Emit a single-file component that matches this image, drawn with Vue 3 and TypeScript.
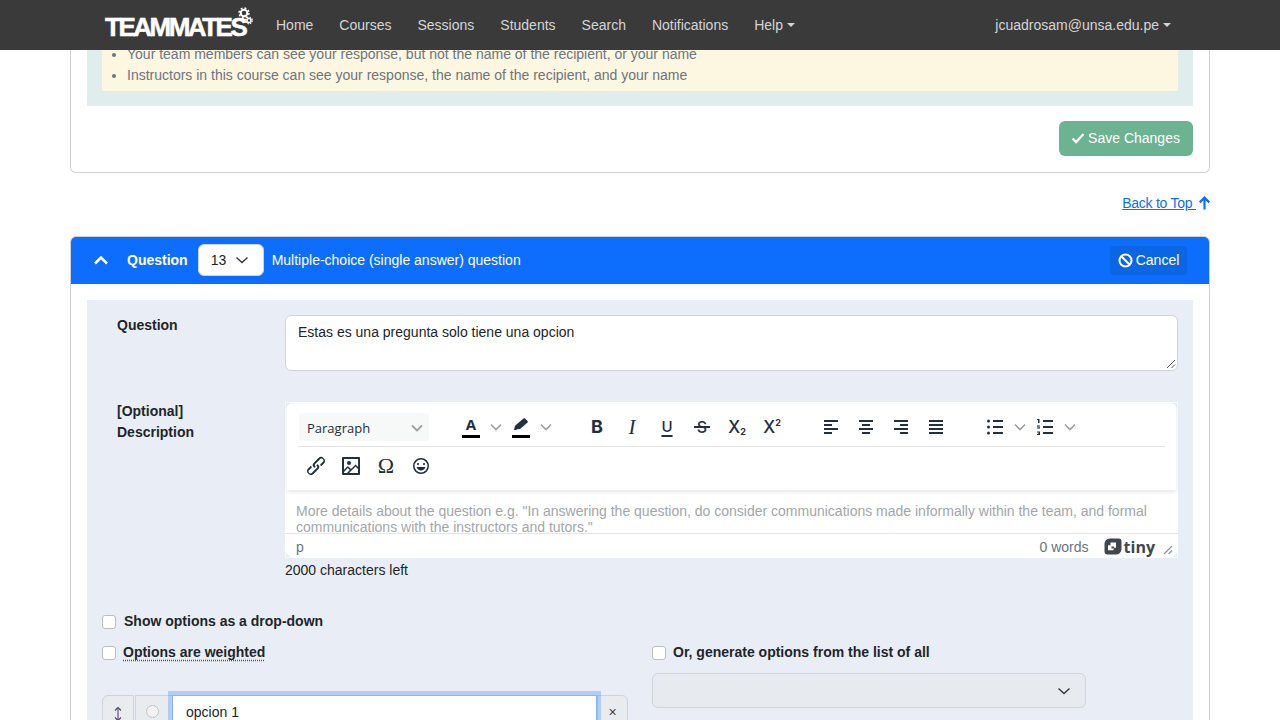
<script setup lang="ts">
const navItems: { label: string; caret?: boolean }[] = [
  { label: "Home" },
  { label: "Courses" },
  { label: "Sessions" },
  { label: "Students" },
  { label: "Search" },
  { label: "Notifications" },
  { label: "Help", caret: true },
];

const alignIcons: string[] = [
  "M5 5h14v2H5zM5 9h8v2H5zM5 13h14v2H5zM5 17h8v2H5z",
  "M5 5h14v2H5zM8 9h8v2H8zM5 13h14v2H5zM8 17h8v2H8z",
  "M5 5h14v2H5zM11 9h8v2h-8zM5 13h14v2H5zM11 17h8v2h-8z",
  "M5 5h14v2H5zM5 9h14v2H5zM5 13h14v2H5zM5 17h14v2H5z",
];
</script>

<template>
  <nav class="navbar">
    <div class="brand">
      <span class="brand-text">TEAMMATES</span>
      <svg class="gears" width="20" height="24" viewBox="0 0 20 24">
        <g fill="none" stroke="#fff">
          <circle cx="9" cy="8" r="3.300" stroke-width="2" />
          <circle cx="9" cy="8" r="5" stroke-width="1.400" stroke-dasharray="2 1.900" />
          <circle cx="14" cy="15.500" r="2" stroke-width="1.500" />
          <circle cx="14" cy="15.500" r="3.300" stroke-width="1.200" stroke-dasharray="1.500 1.100" />
        </g>
      </svg>
    </div>
    <ul class="nav-links">
      <li v-for="item in navItems" :key="item.label" :class="{ caret: item.caret }">{{ item.label }}</li>
    </ul>
    <div class="nav-user caret">jcuadrosam@unsa.edu.pe</div>
  </nav>

  <main class="page">
    <section class="top-card">
      <div class="visibility-box">
        <div class="visibility-msg">
          <ul>
            <li>Your team members can see your response, but not the name of the recipient, or your name</li>
            <li>Instructors in this course can see your response, the name of the recipient, and your name</li>
          </ul>
        </div>
      </div>
      <div class="save-row">
        <button class="btn-save">
          <svg width="14" height="14" viewBox="0 0 14 14"><path d="M1.500 7.500l3.600 3.600 7.400-8" fill="none" stroke="#fff" stroke-width="2.200" /></svg>
          Save Changes
        </button>
      </div>
    </section>

    <div class="back-top">
      <a>Back to Top </a>
      <svg width="14" height="14" viewBox="0 0 14 14"><path d="M8.500 13.500V2M3.700 6.400l4.800-4.800 4.800 4.800" fill="none" stroke="#0d6efd" stroke-width="2.200" /></svg>
    </div>

    <section class="question-card">
      <header class="question-head">
        <svg class="chev-up" width="16" height="12" viewBox="0 0 16 12"><path d="M2 9.500l6-6 6 6" fill="none" stroke="#fff" stroke-width="2.600" /></svg>
        <b class="head-title">Question</b>
        <div class="number-select">
          13
          <svg width="14" height="10" viewBox="0 0 14 10"><path d="M1.500 2.500l5.500 5 5.500-5" fill="none" stroke="#343a40" stroke-width="1.400" /></svg>
        </div>
        <span class="head-type">Multiple-choice (single answer) question</span>
        <button class="btn-cancel">
          <svg width="15" height="15" viewBox="0 0 15 15"><g fill="none" stroke="#fff" stroke-width="2"><circle cx="7.500" cy="7.500" r="6" /><path d="M3.300 3.300l8.400 8.400" /></g></svg>
          Cancel
        </button>
      </header>

      <div class="question-body">
        <div class="form-row">
          <label class="form-label">Question</label>
          <div class="fake-textarea">
            Estas es una pregunta solo tiene una opcion
            <svg class="grip" width="10" height="10" viewBox="0 0 10 10"><path d="M1 9l8-8M5.500 9L9 5.500" stroke="#555" stroke-width="1" /></svg>
          </div>
        </div>

        <div class="form-row desc-row">
          <label class="form-label">[Optional]<br />Description</label>
          <div class="desc-col">
            <div class="editor-frame">
              <div class="editor">
                <div class="editor-header">
                  <div class="tool-row">
                    <div class="format-select">
                      Paragraph
                      <svg width="12" height="8" viewBox="0 0 12 8"><path d="M1 1.500l5 5 5-5" fill="none" stroke="#9aa0a6" stroke-width="1.800" /></svg>
                    </div>
                    <div class="tool-group group-color">
                      <span class="tool color-tool"><span class="glyph-a">A</span><i class="swatch"></i></span>
                      <span class="tool-chev"><svg width="12" height="8" viewBox="0 0 12 8"><path d="M1 1.500l5 5 5-5" fill="none" stroke="#9aa0a6" stroke-width="1.600" /></svg></span>
                      <span class="tool color-tool">
                        <svg width="18" height="12" viewBox="0 0 18 12"><path d="M2 12l1-4.200L11.500.6c.5-.4 1-.4 1.500 0l2.600 2.500c.4.500.4 1 0 1.400L8 11l-3 .2L4.200 12z" fill="#222f3e" /></svg>
                        <i class="swatch"></i>
                      </span>
                      <span class="tool-chev"><svg width="12" height="8" viewBox="0 0 12 8"><path d="M1 1.500l5 5 5-5" fill="none" stroke="#9aa0a6" stroke-width="1.600" /></svg></span>
                    </div>
                    <div class="tool-group group-text">
                      <span class="tool glyph-b">B</span>
                      <span class="tool glyph-i">I</span>
                      <span class="tool glyph-u">U</span>
                      <span class="tool glyph-s">S</span>
                      <span class="tool glyph-x"><span>X<sub>2</sub></span></span>
                      <span class="tool glyph-x"><span>X<sup>2</sup></span></span>
                    </div>
                    <div class="tool-group group-align">
                      <span v-for="d in alignIcons" :key="d" class="tool">
                        <svg width="24" height="24" viewBox="0 0 24 24"><path :d="d" fill="#222f3e" /></svg>
                      </span>
                    </div>
                    <div class="tool-group group-list">
                      <span class="tool">
                        <svg width="24" height="24" viewBox="0 0 24 24"><path d="M10 5h10v2H10zM10 11h10v2H10zM10 17h10v2H10z" fill="#222f3e" /><circle cx="5.500" cy="6" r="1.500" fill="#222f3e" /><circle cx="5.500" cy="12" r="1.500" fill="#222f3e" /><circle cx="5.500" cy="18" r="1.500" fill="#222f3e" /></svg>
                      </span>
                      <span class="tool-chev"><svg width="12" height="8" viewBox="0 0 12 8"><path d="M1 1.500l5 5 5-5" fill="none" stroke="#9aa0a6" stroke-width="1.600" /></svg></span>
                      <span class="tool">
                        <svg width="24" height="24" viewBox="0 0 24 24"><path d="M10 5h10v2H10zM10 11h10v2H10zM10 17h10v2H10zM5 4h1.500v4H5zM4 4h1v1H4zM4 10.500h3v1H5.500v.7H7v1.300H4v-1h1.500v-.7H4zM4 16.500h3v3.500H4v-1h1.700v-.4H4.800v-.7h.9V17.500H4z" fill="#222f3e" /></svg>
                      </span>
                      <span class="tool-chev"><svg width="12" height="8" viewBox="0 0 12 8"><path d="M1 1.500l5 5 5-5" fill="none" stroke="#9aa0a6" stroke-width="1.600" /></svg></span>
                    </div>
                  </div>
                  <div class="tool-row second">
                    <span class="tool">
                      <svg width="24" height="24" viewBox="0 0 24 24"><path d="M6.200 12.300a1 1 0 0 1 1.400 1.400l-2 2a2 2 0 1 0 2.600 2.800l4.800-4.800a1 1 0 0 0 0-1.400 1 1 0 1 1 1.400-1.300 2.900 2.900 0 0 1 0 4L9.600 20a3.900 3.900 0 0 1-5.500-5.500l2-2zm11.600-.6a1 1 0 0 1-1.400-1.400l2-2a2 2 0 1 0-2.600-2.800L11 10.300a1 1 0 0 0 0 1.400A1 1 0 1 1 9.600 13a2.900 2.900 0 0 1 0-4L14.400 4a3.900 3.900 0 0 1 5.500 5.500l-2 2z" fill="#222f3e" /></svg>
                    </span>
                    <span class="tool">
                      <svg width="24" height="24" viewBox="0 0 24 24"><path d="M5 15.700l3.300-3.200c.3-.3.700-.3 1 0L12 15l4.100-4c.3-.4.800-.4 1 0l2 1.900V5H5v10.700zM5 18V19h3l2.800-2.900-2-2L5 17.900zm14-3l-2.500-2.400-6.400 6.500H19v-4zM4 3h16c.6 0 1 .4 1 1v16c0 .6-.4 1-1 1H4a1 1 0 0 1-1-1V4c0-.6.4-1 1-1zm6 8a2 2 0 1 0 0-4 2 2 0 0 0 0 4z" fill="#222f3e" /></svg>
                    </span>
                    <span class="tool glyph-omega">Ω</span>
                    <span class="tool">
                      <svg width="24" height="24" viewBox="0 0 24 24"><path d="M9 11c.6 0 1-.4 1-1s-.4-1-1-1a1 1 0 0 0-1 1c0 .6.4 1 1 1zm6 0c.6 0 1-.4 1-1s-.4-1-1-1a1 1 0 0 0-1 1c0 .6.4 1 1 1zm-3 5.500c2.100 0 4-1.500 4.400-3.500H7.600c.5 2 2.300 3.500 4.400 3.500zM12 4a8 8 0 1 0 0 16 8 8 0 0 0 0-16zm0 14.500a6.500 6.500 0 1 1 0-13 6.500 6.500 0 0 1 0 13z" fill="#222f3e" /></svg>
                    </span>
                  </div>
                </div>
                <div class="editor-content">
                  More details about the question e.g. "In answering the question, do consider communications made informally within the team, and formal communications with the instructors and tutors."
                </div>
                <div class="editor-status">
                  <span class="status-path">p</span>
                  <span class="status-words">0 words</span>
                  <span class="tiny-logo">
                    <svg width="18" height="17" viewBox="0 0 18 17"><path fill-rule="evenodd" d="M6 .5h8.500A3 3 0 0 1 17.500 3.500V11a5.500 5.500 0 0 1-5.500 5.500H3.500a3 3 0 0 1-3-3V6A5.500 5.500 0 0 1 6 .5zM6.500 4.500v2.800H4v5h5.500V9.700H12V4.500zM7.500 8.500h2.500v2H7.500z" fill="#40464d" /></svg>
                    <span>tiny</span>
                  </span>
                  <svg class="status-grip" width="10" height="10" viewBox="0 0 10 10"><path d="M1 9l8-8M5.500 9L9 5.500" stroke="#8a9199" stroke-width="1.100" /></svg>
                </div>
              </div>
            </div>
            <div class="char-count">2000 characters left</div>
          </div>
        </div>

        <div class="options">
          <label class="check-line first">
            <i class="check"></i>
            <b>Show options as a drop-down</b>
          </label>
          <div class="options-grid">
            <div class="options-left">
              <label class="check-line weighted">
                <i class="check"></i>
                <b class="dotted">Options are weighted</b>
              </label>
              <div class="option-row">
                <span class="addon handle">
                  <svg width="10" height="16" viewBox="0 0 10 16"><path d="M5 2v12" stroke="#8b6d9c" stroke-width="1.500" /><path d="M2 4.500L5 1.500l3 3M2 11.500l3 3 3-3" fill="none" stroke="#3f4f66" stroke-width="1.200" /></svg>
                </span>
                <span class="addon radio-box"><i class="radio"></i></span>
                <div class="option-input">opcion 1</div>
                <span class="addon remove">×</span>
              </div>
            </div>
            <div class="options-right">
              <label class="check-line generate">
                <i class="check"></i>
                <b>Or, generate options from the list of all</b>
              </label>
              <div class="disabled-select">
                <svg width="14" height="10" viewBox="0 0 14 10"><path d="M1.500 2.500l5.500 5 5.500-5" fill="none" stroke="#343a40" stroke-width="1.400" /></svg>
              </div>
            </div>
          </div>
        </div>
      </div>
    </section>
  </main>
</template>

<style scoped>
.navbar {
  position: fixed;
  top: 0;
  left: 0;
  right: 0;
  z-index: 10;
  height: 50px;
  background: #3a3a3a;
  display: flex;
  align-items: center;
  padding: 0 109px 0 105px;
  color: #d5d5d5;
}

.brand {
  width: 158px;
  height: 40px;
  flex: none;
  position: relative;
}

.brand-text {
  position: absolute;
  left: 0;
  top: 8px;
  font-size: 26px;
  line-height: 28px;
  font-weight: 700;
  letter-spacing: -2.500px;
  color: #fff;
  -webkit-text-stroke: 0.5px #fff;
}

.gears {
  position: absolute;
  left: 130px;
  top: 0;
}

.nav-links {
  display: flex;
  gap: 26px;
  list-style: none;
  margin: 0 0 0 13px;
  padding: 0;
}

.nav-user {
  margin-left: auto;
}

.caret::after {
  content: "";
  display: inline-block;
  margin-left: 4px;
  vertical-align: 3px;
  border-top: 4px solid currentColor;
  border-left: 4px solid transparent;
  border-right: 4px solid transparent;
}

.page {
  width: 1140px;
  margin: 0 auto;
  height: 720px;
  overflow: hidden;
}

.top-card {
  border: 1px solid #ced0d3;
  border-top: none;
  border-radius: 0 0 6px 6px;
  padding: 0 16px 16px;
  background: #fff;
}

.visibility-box {
  background: #dfeeec;
  padding: 0 15px 15px;
}

.visibility-msg {
  background: #fdf6e1;
  padding: 44px 0 5px;
  color: #6c757d;
  line-height: 21px;
}

.visibility-msg ul {
  margin: 0;
  padding-left: 25px;
}

.save-row {
  display: flex;
  justify-content: flex-end;
  margin-top: 15px;
}

.btn-save {
  height: 35px;
  width: 134px;
  border: none;
  border-radius: 6px;
  background: #6bb391;
  color: #fff;
  font: inherit;
  display: flex;
  align-items: center;
  justify-content: center;
  gap: 3px;
  padding: 0 1px 2px 0;
}

.back-top {
  display: flex;
  justify-content: flex-end;
  align-items: center;
  margin-top: 20px;
  height: 20px;
}

.back-top a {
  color: #0d6efd;
  text-decoration: underline;
  white-space: pre;
  letter-spacing: -0.250px;
}

.question-card {
  margin-top: 23px;
  border: 1px solid #ced0d3;
  border-radius: 6px;
  background: #fff;
  padding-bottom: 16px;
}

.question-head {
  height: 47px;
  box-sizing: border-box;
  background: #0d6efd;
  border-radius: 5px 5px 0 0;
  color: #fff;
  display: flex;
  align-items: center;
  padding: 0 22px 1px;
}

.head-title {
  margin-left: 18px;
}

.number-select {
  width: 66px;
  height: 32px;
  margin-left: 10px;
  padding: 0 14px 0 12px;
  box-sizing: border-box;
  background: #fff;
  border: 1px solid #ced4da;
  border-radius: 6px;
  color: #212529;
  display: flex;
  align-items: center;
  justify-content: space-between;
}

.head-type {
  margin-left: 8px;
}

.btn-cancel {
  margin-left: auto;
  width: 77px;
  height: 29px;
  border: none;
  border-radius: 4px;
  background: #0b66e4;
  color: #fff;
  font: inherit;
  display: flex;
  align-items: center;
  justify-content: center;
  gap: 3px;
  padding: 0;
}

.question-body {
  margin: 16px 16px 0;
  padding: 15px 15px 0;
  background: #e9eef6;
  color: #212529;
}

.form-row {
  display: flex;
  padding-left: 15px;
}

.form-label {
  width: 168px;
  flex: none;
  font-weight: 700;
  line-height: 21px;
}

.fake-textarea {
  flex: 1;
  height: 56px;
  box-sizing: border-box;
  background: #fff;
  border: 1px solid #ced4da;
  border-radius: 6px;
  padding: 6px 12px;
  line-height: 21px;
  position: relative;
}

.grip {
  position: absolute;
  right: 1px;
  bottom: 1px;
}

.desc-row {
  margin-top: 31px;
}

.desc-row .form-label {
  margin-top: -1px;
}

.desc-col {
  flex: 1;
  min-width: 0;
}

.editor-frame {
  background:
    linear-gradient(#f8f9fc, #f8f9fc) 0 0 / 8px 1px no-repeat,
    linear-gradient(#f8f9fc, #f8f9fc) 0 0 / 1px 8px no-repeat,
    linear-gradient(#f8f9fc, #f8f9fc) 100% 0 / 8px 1px no-repeat,
    linear-gradient(#f8f9fc, #f8f9fc) 100% 0 / 1px 8px no-repeat,
    linear-gradient(#f8f9fc, #f8f9fc) 0 100% / 8px 1px no-repeat,
    linear-gradient(#f8f9fc, #f8f9fc) 0 100% / 1px 8px no-repeat,
    linear-gradient(#f8f9fc, #f8f9fc) 100% 100% / 8px 1px no-repeat,
    linear-gradient(#f8f9fc, #f8f9fc) 100% 100% / 1px 8px no-repeat;
}

.editor {
  height: 156px;
  box-sizing: border-box;
  background: #fff;
  border-radius: 10px;
  padding: 2px 2px 0;
  display: flex;
  flex-direction: column;
}

.editor-header {
  height: 86px;
  flex: none;
  box-shadow: 0 2px 4px rgba(34, 47, 62, 0.12);
  padding: 0 11px 0 0;
}

.tool-row {
  height: 43px;
  display: flex;
  align-items: center;
  padding: 4px 0 0 1px;
  box-sizing: border-box;
  border-bottom: 1px solid #e3e3e3;
  margin-left: 11px;
}

.tool-row.second {
  border-bottom: none;
  height: 39px;
  padding: 0 0 1px;
  margin-left: 11.500px;
}

.format-select {
  width: 130px;
  height: 28px;
  flex: none;
  box-sizing: border-box;
  background: #f7f8f8;
  border-radius: 3px;
  padding: 1px 6px 0 8px;
  display: flex;
  align-items: center;
  justify-content: space-between;
  font-family: "Open Sans", sans-serif;
  font-size: 13px;
  color: #222f3e;
}

.tool-group {
  display: flex;
  align-items: center;
  flex: none;
}

.group-color {
  margin-left: 24.500px;
}

.group-text {
  margin-left: 26px;
}

.group-align,
.group-list {
  margin-left: 24px;
}

.tool {
  width: 35px;
  height: 28px;
  flex: none;
  display: flex;
  align-items: center;
  justify-content: center;
  color: #222f3e;
}

.tool-chev {
  width: 15px;
  flex: none;
  display: flex;
  align-items: center;
  justify-content: center;
}

.color-tool {
  position: relative;
  padding-bottom: 6px;
  box-sizing: border-box;
}

.swatch {
  position: absolute;
  left: 8.500px;
  bottom: 3px;
  width: 18px;
  height: 3px;
  background: #000;
}

.glyph-a {
  font: 700 15px/16px "Open Sans", sans-serif;
}

.glyph-b {
  font: 700 18px/24px Inter, sans-serif;
}

.glyph-i {
  font: italic 400 21px/24px "Liberation Serif", serif;
}

.glyph-u {
  font: 500 15px/18px Inter, sans-serif;
  text-decoration: underline;
  text-underline-offset: 3px;
  text-decoration-thickness: 2px;
}

.glyph-s {
  position: relative;
  font: 500 16px/24px Inter, sans-serif;
}

.glyph-s::after {
  content: "";
  position: absolute;
  left: 9.500px;
  right: 9.500px;
  top: 13px;
  height: 2px;
  background: #222f3e;
}

.glyph-x {
  font: 500 17px/24px Inter, sans-serif;
}

.glyph-x sub,
.glyph-x sup {
  font-size: 9px;
  font-weight: 700;
  line-height: 0;
}

.glyph-x sub {
  vertical-align: -2px;
}

.glyph-x sup {
  vertical-align: 7px;
}

.glyph-omega {
  font: 400 22px/24px "Liberation Serif", serif;
}

.editor-content {
  height: 43px;
  flex: none;
  box-sizing: border-box;
  padding: 13px 9px 0;
  font-size: 14px;
  line-height: 16px;
  color: #a2a6aa;
}

.editor-status {
  height: 25px;
  box-sizing: border-box;
  flex: none;
  border-top: 1px solid #e3e3e3;
  margin: 0 -2px;
  padding: 1px 5px 0 11px;
  display: flex;
  align-items: center;
  color: #6a7280;
  font-size: 14px;
}

.status-words {
  margin-left: auto;
}

.tiny-logo {
  margin-left: 15px;
  display: flex;
  align-items: center;
  gap: 2px;
  color: #40464d;
  font: 700 16px/20px "Open Sans", sans-serif;
}

.status-grip {
  margin-left: 8px;
  margin-top: 6px;
}

.char-count {
  line-height: 21px;
  margin-top: 2px;
}

.options {
  padding-top: 29px;
}

.check-line {
  display: flex;
  align-items: center;
  height: 21px;
  color: #212529;
}

.check-line.first {
  gap: 8px;
}

.check-line.weighted,
.check-line.generate {
  gap: 7px;
}

.check {
  width: 14px;
  height: 14px;
  margin-top: 2px;
  box-sizing: border-box;
  flex: none;
  background: #fff;
  border: 1px solid #bdbdbd;
  border-radius: 3px;
}

.dotted {
  text-decoration: underline dotted #555;
  text-underline-offset: 3px;
}

.options-grid {
  display: flex;
  margin-top: 10px;
}

.options-left {
  width: 526px;
  flex: none;
}

.options-right {
  margin-left: 24px;
  width: 434px;
  flex: none;
}

.option-row {
  display: flex;
  height: 38px;
  margin-top: 33px;
}

.addon {
  box-sizing: border-box;
  flex: none;
  background: #e9ecef;
  border: 1px solid #ced4da;
  height: 38px;
  display: flex;
  justify-content: center;
}

.handle {
  width: 32px;
  margin-right: 1px;
  border-radius: 6px 0 0 6px;
  padding-top: 10px;
}

.radio-box {
  width: 37px;
  border-right: none;
  padding: 9px 3px 0 0;
}

.radio {
  width: 13px;
  height: 13px;
  box-sizing: border-box;
  background: #f2f2f2;
  border: 1px solid #c4c4c4;
  border-radius: 50%;
}

.option-input {
  flex: 1;
  height: 38px;
  box-sizing: border-box;
  background: #fff;
  border: 1px solid #86b7fe;
  box-shadow: 0 0 0 4px rgba(13, 110, 253, 0.25);
  padding: 6px 13px;
  line-height: 21px;
  position: relative;
}

.remove {
  width: 31px;
  border-radius: 0 6px 6px 0;
  padding-top: 8px;
  font-size: 14px;
  color: #444;
}

.disabled-select {
  height: 35px;
  margin-top: 11px;
  box-sizing: border-box;
  background: #e7eaee;
  border: 1px solid #ced4da;
  border-radius: 6px;
  display: flex;
  align-items: center;
  justify-content: flex-end;
  padding-right: 14px;
}
</style>

<style>
html,
body {
  margin: 0;
  height: 720px;
  overflow: hidden;
  background: #fff;
  font-family: "Liberation Sans", Arial, sans-serif;
  font-size: 14px;
}
</style>
